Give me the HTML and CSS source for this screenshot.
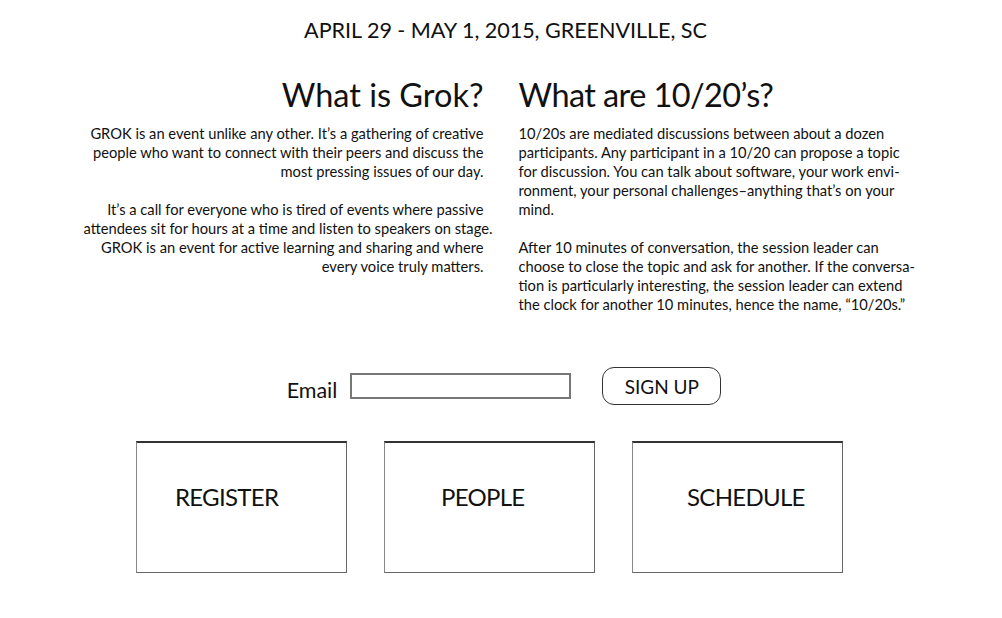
FILE: index.html
```html
<!DOCTYPE html>
<html lang="en">
<head>
<meta charset="utf-8">
<title>GROK</title>
<link rel="stylesheet" href="styles.css">
</head>
<body>
<header class="dateline">APRIL 29 - MAY 1, 2015, GREENVILLE, SC</header>

<main class="intro">
  <section class="col col-left">
    <h2 class="col-title">What is Grok?</h2>
    <p class="col-text">GROK is an event unlike any other. It’s a gathering of creative<br>people who want to connect with their peers and discuss the<br>most pressing issues of our day.</p>
    <p class="col-text">It’s a call for everyone who is tired of events where passive<br>attendees sit for hours at a time and listen to speakers on stage.<br>GROK is an event for active learning and sharing and where<br>every voice truly matters.</p>
  </section>
  <section class="col col-right">
    <h2 class="col-title">What are 10/20’s?</h2>
    <p class="col-text">10/20s are mediated discussions between about a dozen<br>participants. Any participant in a 10/20 can propose a topic<br>for discussion. You can talk about software, your work envi-<br>ronment, your personal challenges–anything that’s on your<br>mind.</p>
    <p class="col-text">After 10 minutes of conversation, the session leader can<br>choose to close the topic and ask for another. If the conversa-<br>tion is particularly interesting, the session leader can extend<br>the clock for another 10 minutes, hence the name, “10/20s.”</p>
  </section>
</main>

<form class="signup" onsubmit="return false">
  <label class="signup-label" for="email">Email</label>
  <input class="signup-input" id="email" type="text">
  <button class="signup-button" type="button">SIGN UP</button>
</form>

<nav class="tiles">
  <a class="tile tile-register">REGISTER</a>
  <a class="tile tile-people">PEOPLE</a>
  <a class="tile tile-schedule">SCHEDULE</a>
</nav>
</body>
</html>
```

FILE: styles.css
```css
* { box-sizing: border-box; }

body {
  margin: 0;
  background: #fff;
  color: #111;
  font-family: "Lato", "Open Sans", sans-serif;
}

.dateline {
  padding-top: 15px;
  padding-left: 9px;
  height: 75px;
  line-height: 30px;
  font-size: 21.6px;
  letter-spacing: -0.05px;
  text-align: center;
}

.intro {
  display: flex;
  justify-content: center;
  gap: 35px;
}

.col {
  width: 400px;
  white-space: nowrap;
}

.col-left { text-align: right; }
.col-right { text-align: left; }

.col-title {
  margin: 0 0 9px;
  font-size: 32.5px;
  line-height: 40px;
  font-weight: 400;
}

.col-right .col-title { letter-spacing: -0.6px; }

.col-text {
  margin: 0 0 19px;
  font-size: 14.7px;
  line-height: 19px;
}

.signup {
  margin-top: 34px;
  display: flex;
  justify-content: center;
  align-items: center;
  padding-left: 6px;
}

.signup-label {
  font-size: 21.5px;
  padding-top: 8px;
  margin-right: 13px;
}

.signup-input {
  width: 221px;
  height: 26px;
  border: 2px solid #777;
  border-radius: 0;
  margin-right: 31px;
  outline: none;
}

.signup-button {
  width: 119px;
  height: 38px;
  border: 1.5px solid #333;
  border-radius: 12px;
  background: #fff;
  color: #111;
  font-family: inherit;
  font-size: 19px;
}

.tiles {
  display: flex;
  gap: 37px;
  margin-top: 36px;
  padding-left: 136px;
}

.tile {
  display: block;
  width: 211px;
  height: 132px;
  border: 1.5px solid #666;
  border-top: 2px solid #333;
  border-left-color: #888;
  padding-top: 37px;
  font-size: 24px;
  line-height: 34px;
  color: #111;
  letter-spacing: -0.7px;
}

.tile-register { padding-left: 38px; }
.tile-people { padding-left: 56px; }
.tile-schedule { padding-left: 54px; }
```
